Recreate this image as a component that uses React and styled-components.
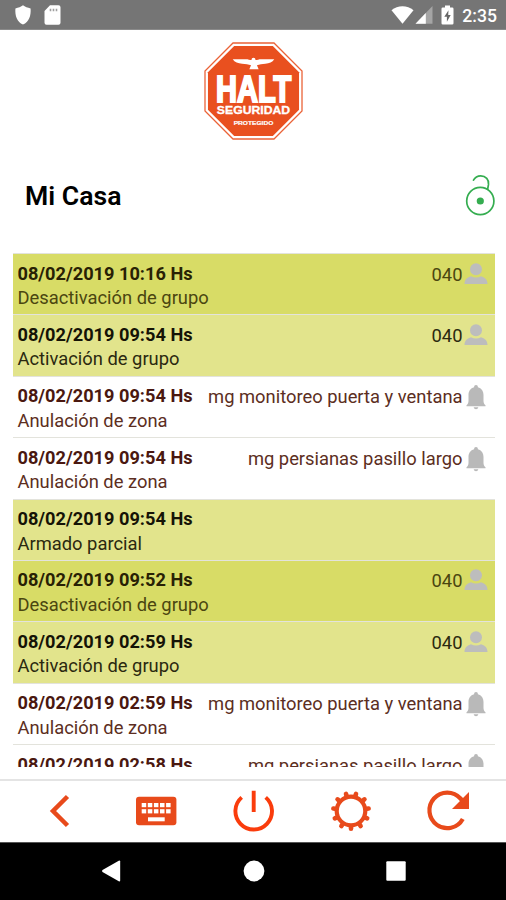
import React from 'react';
import styled, { createGlobalStyle } from 'styled-components';

const GlobalStyle = createGlobalStyle`
  * {
    box-sizing: border-box;
  }

  body {
    margin: 0;
    background-color: #fff;
    font-family: Roboto, 'Liberation Sans', sans-serif;
  }

  svg {
    display: block;
    flex-shrink: 0;
  }
`;

const Screen = styled.div`
  display: flex;
  flex-direction: column;
  width: 506px;
  height: 900px;
  overflow: hidden;
  background-color: #fff;
`;

const StatusBar = styled.header`
  display: flex;
  justify-content: space-between;
  align-items: center;
  height: 30px;
  padding: 0 9px 0 14px;
  background-color: #757575;
  border-bottom: 1px solid #8a8a8a;
  color: #fff;
`;

const StatusGroup = styled.div`
  display: flex;
  align-items: center;
  gap: ${({ $gap }) => $gap}px;
`;

const Clock = styled.span`
  padding-top: 3px;
  font-size: 17.6px;
  font-weight: 500;
  line-height: 20px;
`;

const LogoArea = styled.div`
  display: flex;
  justify-content: center;
  height: 130px;
  padding: 12px 0 0 1px;
`;

const TitleBar = styled.div`
  display: flex;
  justify-content: space-between;
  align-items: center;
  height: 72px;
  padding: 0 9px 0 25px;
`;

const Title = styled.h1`
  margin: 0;
  font-size: 26.600px;
  font-weight: 600;
  line-height: 32px;
  color: #000;
`;

const EventList = styled.ul`
  height: 514px;
  margin: 21px 11.5px 0 12.5px;
  padding: 0;
  overflow: hidden;
  list-style: none;
`;

const tones = {
  disarmed: { background: '#d8dc66', date: '#282104', text: '#4b4610' },
  armed: { background: '#e2e48c', date: '#151306', text: '#2b2910' },
  zone: { background: '#fff', date: '#4a1810', text: '#5c2e22' },
};

const EventRow = styled.li`
  display: flex;
  justify-content: space-between;
  height: 61.4px;
  padding: 7.5px 6.5px 0 5px;
  border-top: 1.5px solid #e3e3dc;
  background-color: ${({ $tone }) => tones[$tone].background};
  color: ${({ $tone }) => tones[$tone].text};
  font-size: 18.35px;
  line-height: 24.5px;
  white-space: nowrap;
`;

const EventDate = styled.div`
  font-size: 18.2px;
  font-weight: 700;
  color: ${({ $tone }) => tones[$tone].date};
`;

const EventSource = styled.div`
  display: flex;
  align-items: flex-start;
  gap: 1.5px;
  height: 26px;
  padding-top: 1px;
`;

const TabBar = styled.nav`
  display: flex;
  height: 63px;
  margin-top: 12px;
  padding: 0 9.5px 1px 10.5px;
  border-top: 2px solid #e4e4e4;
`;

const TabButton = styled.button`
  display: flex;
  flex: 1;
  justify-content: center;
  align-items: center;
  padding: 0;
  border: none;
  background: none;
  color: #e84a1b;
  cursor: pointer;
`;

const SystemBar = styled.footer`
  display: flex;
  justify-content: center;
  height: 58px;
  padding: 0 0 2px 1px;
  background-color: #000;
  border-top: 1px solid #555;
`;

const SystemButton = styled.button`
  display: flex;
  justify-content: center;
  align-items: center;
  width: 142.5px;
  padding: 0;
  border: none;
  background: none;
  color: #fff;
`;

const events = [
  { date: '08/02/2019 10:16 Hs', text: 'Desactivación de grupo', tone: 'disarmed', source: '040', icon: 'user' },
  { date: '08/02/2019 09:54 Hs', text: 'Activación de grupo', tone: 'armed', source: '040', icon: 'user' },
  { date: '08/02/2019 09:54 Hs', text: 'Anulación de zona', tone: 'zone', source: 'mg monitoreo puerta y ventana', icon: 'bell' },
  { date: '08/02/2019 09:54 Hs', text: 'Anulación de zona', tone: 'zone', source: 'mg persianas pasillo largo', icon: 'bell' },
  { date: '08/02/2019 09:54 Hs', text: 'Armado parcial', tone: 'armed' },
  { date: '08/02/2019 09:52 Hs', text: 'Desactivación de grupo', tone: 'disarmed', source: '040', icon: 'user' },
  { date: '08/02/2019 02:59 Hs', text: 'Activación de grupo', tone: 'armed', source: '040', icon: 'user' },
  { date: '08/02/2019 02:59 Hs', text: 'Anulación de zona', tone: 'zone', source: 'mg monitoreo puerta y ventana', icon: 'bell' },
  { date: '08/02/2019 02:58 Hs', text: 'Anulación de zona', tone: 'zone', source: 'mg persianas pasillo largo', icon: 'bell' },
];

const ShieldIcon = () => (
  <svg width="18" height="20" viewBox="0 0 18 20" fill="currentColor">
    <path d="M9 .3c2 1.500 4.600 2.600 7.600 3.100.5 7.500-1.600 13.300-7.600 16.200C3 16.700.9 10.900 1.400 3.400 4.400 2.900 7 1.800 9 .3z" />
  </svg>
);

const SdCardIcon = () => (
  <svg width="17" height="20" viewBox="0 0 17 20">
    <path d="M6 .3h8.500a2 2 0 0 1 2 2v15.400a2 2 0 0 1-2 2h-12a2 2 0 0 1-2-2V6z" fill="currentColor" />
    <path d="M6.500 3.800v2.400M9.500 3.800v2.400M12.500 3.800v2.400" stroke="#a0a0a0" strokeWidth="1.600" />
  </svg>
);

const WifiIcon = () => (
  <svg width="23" height="20" viewBox="0 0 23 20" fill="currentColor">
    <path d="M.5 5.200C6.700-.2 16.300-.2 22.500 5.200L11.500 18.800z" />
  </svg>
);

const SignalIcon = () => (
  <svg width="18" height="20" viewBox="0 0 18 20" fill="currentColor">
    <path d="M17.500 1v17.800H.5z" opacity=".35" />
    <path d="M10.800 8v10.800H.5z" />
  </svg>
);

const BatteryIcon = () => (
  <svg width="13" height="20" viewBox="0 0 13 20">
    <path d="M4 .5h5v2h2.200a1.300 1.300 0 0 1 1.300 1.300v14.400a1.300 1.300 0 0 1-1.300 1.300H1.800A1.300 1.300 0 0 1 .5 18.200V3.800a1.300 1.300 0 0 1 1.300-1.300H4z" fill="currentColor" />
    <path d="M7.500 5.200L3.300 11.700h2.600v5l3.800-6.600H7.200z" fill="#666" />
  </svg>
);

const HaltLogo = () => (
  <svg width="99" height="98" viewBox="0 0 100 99" fontFamily="'Liberation Sans', Arial, sans-serif" fontWeight="700" fill="#fff">
    <path d="M29.300 1h41.400L99 29.300v40.400L70.700 98H29.300L1 69.700V29.300z" stroke="#ea6237" strokeWidth="1.300" />
    <path d="M30.500 4h39L96 30.500v38L69.500 95h-39L4 68.500v-38z" fill="#e9501f" />
    <path d="M29 17.500h13.500c2 0 3.700.8 5.500.8 0-1.700.7-2.500 2-2.500s2 .8 2 2.500c1.800 0 3.500-.8 5.500-.8H71c-2 3-5 4.300-9 4.500-3.200.3-6 .5-8.500 1.500l1.700 4h-9.400l1.700-4C45 22.500 42 22.300 38.500 22c-4-.2-7.500-1.500-9.500-4.500z" />
    <text x="12.200" y="61" fontSize="37.500" textLength="76" lengthAdjust="spacingAndGlyphs" stroke="#fff" strokeWidth="2.200">HALT</text>
    <text x="13" y="73" fontSize="11.200" textLength="74" lengthAdjust="spacingAndGlyphs" stroke="#fff" strokeWidth=".3">SEGURIDAD</text>
    <text x="30" y="83.500" fontSize="6" textLength="40" lengthAdjust="spacingAndGlyphs" stroke="#fff" strokeWidth=".2">PROTEGIDO</text>
  </svg>
);

const UnlockedIcon = () => (
  <svg width="32" height="48" viewBox="0 0 32 48" fill="none" stroke="#35ad50" strokeWidth="1.700" strokeLinecap="round">
    <circle cx="15.300" cy="29" r="13.600" />
    <circle cx="15.300" cy="29" r="3.600" fill="#35ad50" stroke="none" />
    <path d="M8.500 8.200C10 5.300 12.700 3.800 15.700 3.800c5 0 8.500 4 7.800 8.600L22.600 17.500" />
  </svg>
);

const UserIcon = () => (
  <svg width="24" height="25" viewBox="0 0 24 25" fill="#bdbdbd">
    <circle cx="12" cy="6.300" r="6" />
    <path d="M.5 21c0-4.500 3-6.700 6.500-7.700 3 1.700 7 1.700 10 0 3.500 1 6.500 3.200 6.500 7.700z" />
  </svg>
);

const BellIcon = () => (
  <svg width="24" height="25" viewBox="0 0 24 25" fill="#b9b9b9">
    <path d="M12 0c1.200 0 1.900.8 1.900 2.200 3.700 1 5.600 4 5.600 7.800v6c0 2 .8 3.200 2 4.300v.9h-19v-.9c1.200-1.100 2-2.300 2-4.300v-6c0-3.800 1.900-6.800 5.600-7.800C10.100.8 10.800 0 12 0z" />
    <path d="M9.700 22.300h4.600c-.2 1.300-1.100 2-2.300 2s-2.100-.7-2.300-2z" />
  </svg>
);

const sourceIcons = { user: UserIcon, bell: BellIcon };

const BackIcon = () => (
  <svg width="44" height="44" viewBox="0 0 44 44" fill="none" stroke="currentColor" strokeWidth="4.500">
    <path d="M30.500 7.500L16 22 30.500 36.500" />
  </svg>
);

const KeyboardIcon = () => (
  <svg width="44" height="44" viewBox="0 0 44 44">
    <rect x="2" y="7.700" width="40.400" height="28.600" rx="3" fill="currentColor" />
    {[14, 20.2].map((y) =>
      [0, 1, 2, 3, 4].map((col) => (
        <rect key={`${y}-${col}`} x={7.7 + col * 6.1} y={y} width="4.500" height="4.200" fill="#fff" />
      ))
    )}
    <rect x="14" y="28.300" width="16.700" height="4" fill="#fff" />
  </svg>
);

const PowerIcon = () => (
  <svg width="44" height="44" viewBox="0 0 44 44" fill="none" stroke="#fa3c0c" strokeWidth="3.900">
    <path d="M9.700 8.400A18.300 18.300 0 1 0 33.700 8.400M21.700 1.700v21.300" />
  </svg>
);

const GearIcon = () => (
  <svg width="44" height="44" viewBox="0 0 44 44" fill="none" stroke="currentColor">
    <circle cx="22" cy="22" r="14.300" strokeWidth="4.200" />
    {Array.from({ length: 11 }, (_, i) => (
      <path
        key={i}
        d="M22 38v1.800"
        strokeWidth="4.600"
        strokeLinecap="round"
        transform={`rotate(${(i * 360) / 11} 22 22)`}
      />
    ))}
  </svg>
);

const RefreshIcon = () => (
  <svg width="44" height="44" viewBox="0 0 44 44">
    <path d="M36.800 30A17.800 17.800 0 1 1 34.500 9.500L38 13.500" fill="none" stroke="currentColor" strokeWidth="4.200" />
    <path d="M43 3v17H26z" fill="currentColor" />
  </svg>
);

const tabs = [
  { label: 'Volver', Icon: BackIcon },
  { label: 'Teclado', Icon: KeyboardIcon },
  { label: 'Armar', Icon: PowerIcon },
  { label: 'Ajustes', Icon: GearIcon },
  { label: 'Actualizar', Icon: RefreshIcon },
];

function EventItem({ event }) {
  const Icon = sourceIcons[event.icon];

  return (
    <EventRow $tone={event.tone}>
      <div>
        <EventDate $tone={event.tone}>{event.date}</EventDate>
        <div>{event.text}</div>
      </div>
      {event.source && (
        <EventSource>
          <span>{event.source}</span>
          <Icon />
        </EventSource>
      )}
    </EventRow>
  );
}

function App() {
  return (
    <>
      <GlobalStyle />
      <Screen>
        <StatusBar>
          <StatusGroup $gap={12}>
            <ShieldIcon />
            <SdCardIcon />
          </StatusGroup>
          <StatusGroup $gap={8}>
            <StatusGroup $gap={1}>
              <WifiIcon />
              <SignalIcon />
            </StatusGroup>
            <BatteryIcon />
            <Clock>2:35</Clock>
          </StatusGroup>
        </StatusBar>
        <LogoArea>
          <HaltLogo />
        </LogoArea>
        <TitleBar>
          <Title>Mi Casa</Title>
          <UnlockedIcon />
        </TitleBar>
        <EventList>
          {events.map((event, index) => (
            <EventItem key={index} event={event} />
          ))}
        </EventList>
        <TabBar>
          {tabs.map(({ label, Icon }) => (
            <TabButton key={label} aria-label={label}>
              <Icon />
            </TabButton>
          ))}
        </TabBar>
        <SystemBar>
          <SystemButton aria-label="Atrás">
            <svg width="20" height="22" viewBox="0 0 20 22" fill="currentColor">
              <path d="M18.200.5q1 0 1 1v19q0 1-1 1L1.500 12q-1-1 0-2z" />
            </svg>
          </SystemButton>
          <SystemButton aria-label="Inicio">
            <svg width="22" height="22" viewBox="0 0 22 22" fill="currentColor">
              <circle cx="11" cy="11" r="10.400" />
            </svg>
          </SystemButton>
          <SystemButton aria-label="Recientes">
            <svg width="20" height="20" viewBox="0 0 20 20" fill="currentColor">
              <rect x=".3" y=".3" width="19.400" height="19.400" rx="1" />
            </svg>
          </SystemButton>
        </SystemBar>
      </Screen>
    </>
  );
}

export default App;
